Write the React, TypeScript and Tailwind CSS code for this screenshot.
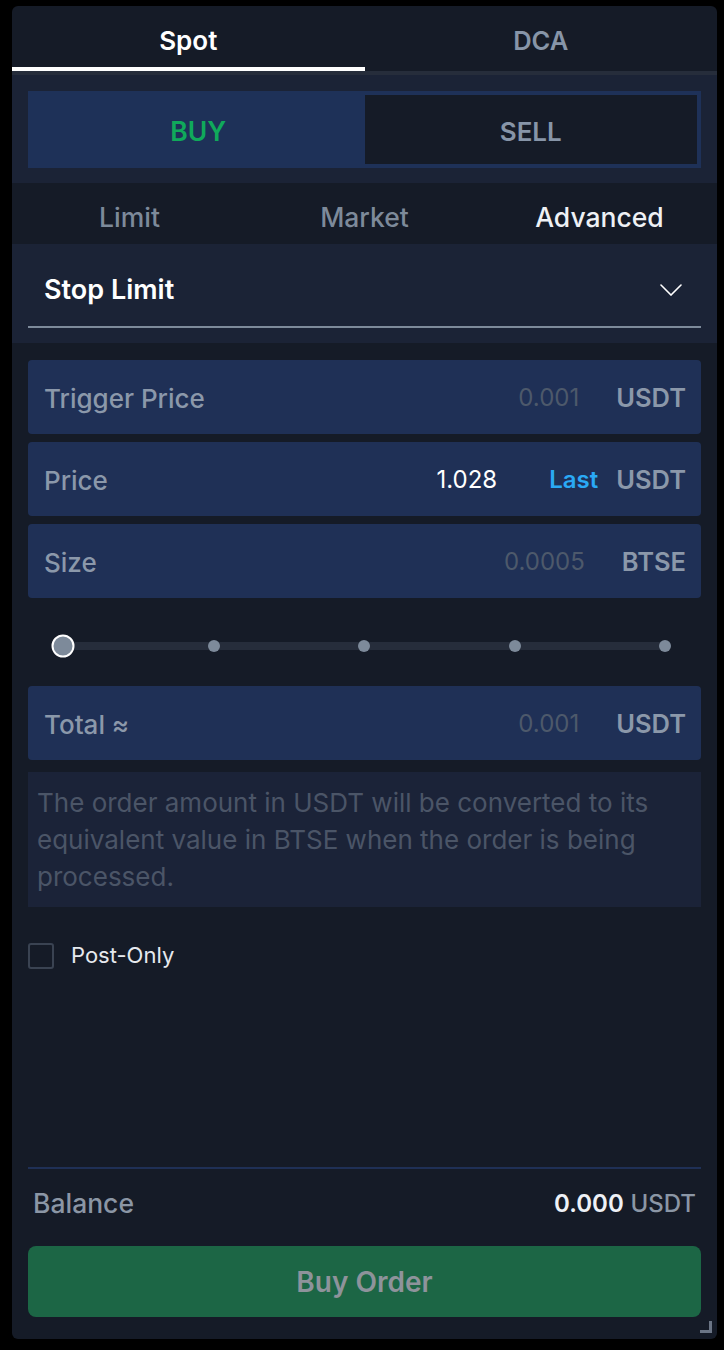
const fields = [
  { id: 1, label: "Trigger Price", value: "0.001", unit: "USDT", filled: false },
  { id: 2, label: "Price", value: "1.028", unit: "USDT", filled: true },
  { id: 3, label: "Size", value: "0.0005", unit: "BTSE", filled: false },
];

function Field({ label, value, unit, filled }: { label: string; value: string; unit: string; filled: boolean }) {
  return (
    <div className="flex h-[74px] items-center rounded-sm bg-[#1f3056] pl-4 pr-[15px] pt-[2px]">
      <span className="flex-1 text-[26px] font-medium text-[#8b98aa]">{label}</span>
      <span className={filled ? "text-[24px] text-white" : "text-[24px] text-[#4d596b]"}>{value}</span>
      {filled && <span className="ml-[52px] text-[24px] font-semibold text-[#2aa9f5]">Last</span>}
      <span className={`${filled ? "ml-[18px]" : "ml-[37px]"} text-[25.5px] font-semibold text-[#8b98aa]`}>{unit}</span>
    </div>
  );
}

export default function App() {
  return (
    <div className="min-h-[1350px] bg-black pl-[12px] pt-[6px] font-[family-name:Inter,sans-serif]">
      <div className="relative flex h-[1333px] w-[705px] flex-col overflow-hidden rounded-md bg-[#151b27]">
        {/* Spot / DCA tabs */}
        <div className="flex">
          <button className="h-[65px] flex-1 border-b-4 border-white pt-2 text-[26px] font-semibold text-white">Spot</button>
          <button className="h-[65px] flex-1 border-b-4 border-transparent pt-[10px] text-[25.5px] font-semibold text-[#8795a8]">DCA</button>
        </div>
        <div className="h-1 bg-[#262d3b]" />

        {/* Buy / Sell toggle */}
        <div className="bg-[#1b2336] px-4 pb-[15px] pt-4">
          <div className="flex h-[77px] bg-[#1e3158] p-1">
            <button className="flex-1 pt-1 text-[26.5px] font-semibold text-[#10a95b]">BUY</button>
            <button className="flex-1 bg-[#151b27] pt-1 text-[26px] font-semibold text-[#8795a8]">SELL</button>
          </div>
        </div>

        {/* Order type */}
        <div className="grid h-[61px] grid-cols-3 items-center pt-2 text-[26.5px] font-medium">
          <span className="text-center text-[#7d8a9a]">Limit</span>
          <span className="text-center text-[#7d8a9a]">Market</span>
          <span className="text-center text-[#eef1f5]">Advanced</span>
        </div>

        <div className="bg-[#1b2336] px-4 pb-[15px] pt-[10px]">
          <div className="flex h-[74px] items-center justify-between border-b-2 border-[#7d8a9a] pl-4 pr-[19px]">
            <span className="text-[27px] font-semibold text-white">Stop Limit</span>
            <svg width="22" height="12" viewBox="0 0 22 12" fill="none" stroke="#ffffff" strokeWidth="1.6" strokeLinecap="round">
              <polyline points="1,1 11,11 21,1" />
            </svg>
          </div>
        </div>

        {/* Inputs */}
        <div className="flex flex-col px-4 pt-[17px]">
          <div className="flex flex-col gap-2">
            {fields.map((f) => (
              <Field key={f.id} {...f} />
            ))}
          </div>

          <div className="flex h-[88px] items-center pt-2">
            <div className="relative ml-[35px] mr-[36px] h-2 flex-1 bg-[#262d3b]">
              {[25, 50, 75, 100].map((p) => (
                <span
                  key={p}
                  className="absolute top-1/2 h-3 w-3 -translate-x-1/2 -translate-y-1/2 rounded-full bg-[#7d8a9a]"
                  style={{ left: `${p}%` }}
                />
              ))}
              <span className="absolute left-0 top-1/2 h-[23px] w-[23px] -translate-x-1/2 -translate-y-1/2 rounded-full border-2 border-white bg-[#7d8a9a]" />
            </div>
          </div>

          <div className="flex h-[74px] items-center rounded-sm bg-[#1f3056] pl-4 pr-[15px] pt-[2px]">
            <span className="flex-1 text-[26px] font-medium text-[#8b98aa]">Total ≈</span>
            <span className="text-[24px] text-[#4d596b]">0.001</span>
            <span className="ml-[37px] text-[25.5px] font-semibold text-[#8b98aa]">USDT</span>
          </div>

          <p className="mt-3 bg-[#1b2338] px-[9px] py-3 text-[26px] leading-[37px] text-[#4b5567]">
            The order amount in USDT will be converted to its equivalent value in BTSE when the order is being processed.
          </p>

          <label className="mt-8 flex items-center">
            <span className="h-[26px] w-[26px] rounded-[3px] border-2 border-[#3a4352]" />
            <span className="ml-[17px] text-[22px] text-[#e6e9ee]">Post-Only</span>
          </label>
        </div>

        {/* Balance + submit */}
        <div className="mt-auto px-4 pb-[22px]">
          <div className="h-[2px] bg-[#1f3056]" />
          <div className="flex h-[70px] items-center justify-between px-[5px]">
            <span className="text-[26.5px] font-medium text-[#8b96a5]">Balance</span>
            <span className="text-[24px]">
              <span className="font-semibold text-[#eef1f6]">0.000</span>{" "}
              <span className="font-medium text-[#8b96a5]">USDT</span>
            </span>
          </div>
          <button className="mt-[7px] h-[71px] w-full rounded-lg bg-[#1c6645] text-[28px] font-semibold text-[#8e939b]">
            Buy Order
          </button>
        </div>

        <span className="absolute bottom-[6px] right-[5px] h-3 w-3 border-b-[3px] border-r-[3px] border-[#6b7585]" />
      </div>
    </div>
  );
}
